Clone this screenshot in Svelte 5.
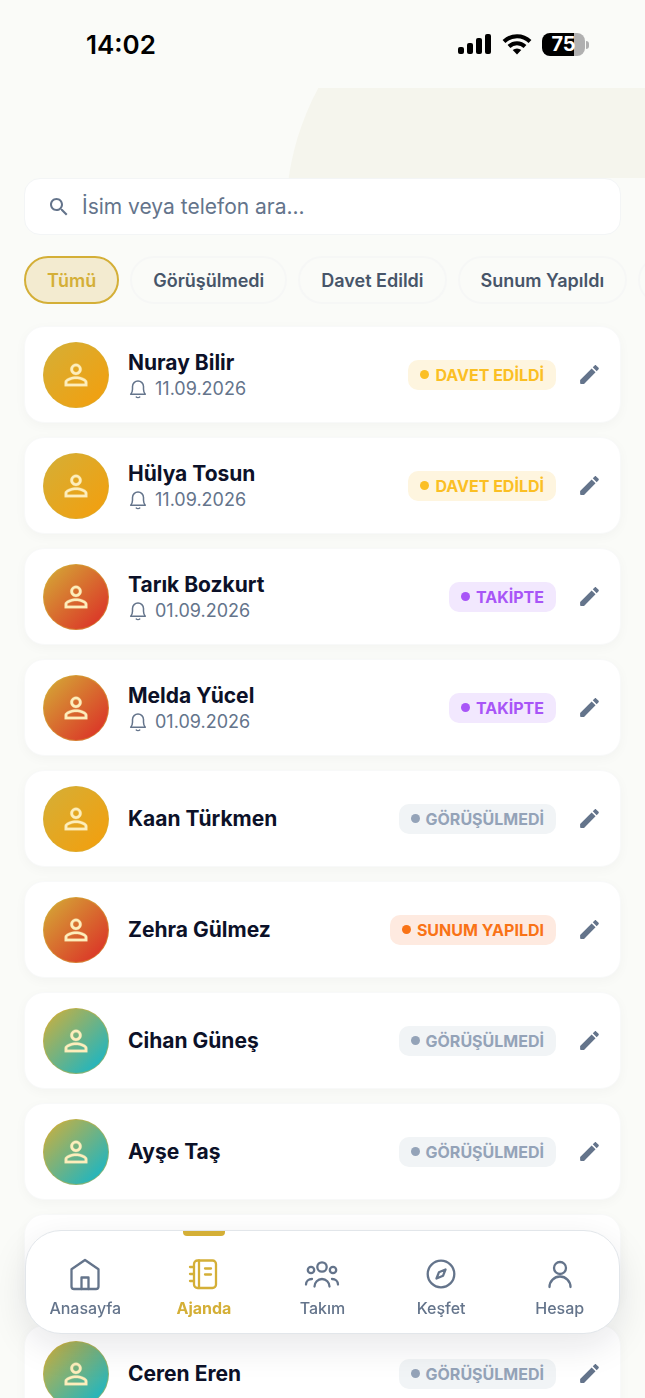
<script>
    let filters = ["Tümü", "Görüşülmedi", "Davet Edildi", "Sunum Yapıldı", "Takipte"];
    let activeFilter = "Tümü";
    let search = "";

    const statuses = {
        invited: "DAVET EDİLDİ",
        follow: "TAKİPTE",
        none: "GÖRÜŞÜLMEDİ",
        presented: "SUNUM YAPILDI",
    };

    let contacts = [
        { name: "Nuray Bilir", date: "11.09.2026", status: "invited", tone: "amber" },
        { name: "Hülya Tosun", date: "11.09.2026", status: "invited", tone: "amber" },
        { name: "Tarık Bozkurt", date: "01.09.2026", status: "follow", tone: "red" },
        { name: "Melda Yücel", date: "01.09.2026", status: "follow", tone: "red" },
        { name: "Kaan Türkmen", status: "none", tone: "amber" },
        { name: "Zehra Gülmez", status: "presented", tone: "red" },
        { name: "Cihan Güneş", status: "none", tone: "cyan" },
        { name: "Ayşe Taş", status: "none", tone: "cyan" },
        { name: "", status: "", tone: "amber" },
        { name: "Ceren Eren", status: "none", tone: "cyan" },
    ];

    let tabs = [
        { id: "home", label: "Anasayfa" },
        { id: "agenda", label: "Ajanda" },
        { id: "team", label: "Takım" },
        { id: "explore", label: "Keşfet" },
        { id: "account", label: "Hesap" },
    ];
    let activeTab = "agenda";
</script>

<div class="app">
    <div class="status-bar">
        <span class="clock">14:02</span>
        <div class="indicators">
            <svg width="34" height="22" viewBox="0 0 34 22">
                <rect x="0" y="14" width="6" height="7" rx="2" />
                <rect x="9" y="10" width="6" height="11" rx="2" />
                <rect x="18" y="5" width="6" height="16" rx="2" />
                <rect x="27" y="1" width="6" height="20" rx="2" />
            </svg>
            <svg width="30" height="22" viewBox="0 0 30 22">
                <g fill="none" stroke="#000" stroke-width="4">
                    <path d="M2 8.5a18.5 18.5 0 0 1 26 0" />
                    <path d="M7 13.5a11.5 11.5 0 0 1 16 0" />
                </g>
                <path d="M15 21.5l-4.3-4.4a6.5 6.5 0 0 1 8.6 0z" />
            </svg>
            <div class="battery"><span>75</span></div>
        </div>
    </div>

    <div class="header"></div>

    <div class="search">
        <svg width="24" height="24" viewBox="0 0 24 24">
            <path d="M15.5 14h-.79l-.28-.27C15.41 12.59 16 11.11 16 9.5 16 5.91 13.09 3 9.5 3S3 5.91 3 9.5 5.91 16 9.5 16c1.61 0 3.09-.59 4.23-1.57l.27.28v.79l5 4.99L20.49 19l-4.99-5zm-6 0C7.01 14 5 11.99 5 9.5S7.01 5 9.5 5 14 7.01 14 9.5 11.99 14 9.5 14z" />
        </svg>
        <input type="text" bind:value={search} placeholder="İsim veya telefon ara..." aria-label="İsim veya telefon ara" />
    </div>

    <div class="filters">
        {#each filters as filter}
            <button class="chip" class:active={filter === activeFilter} on:click={() => (activeFilter = filter)}>{filter}</button>
        {/each}
    </div>

    <div class="list">
        {#each contacts as contact}
            <div class="card">
                <div class="avatar {contact.tone}">
                    <svg width="34" height="34" viewBox="0 0 24 24">
                        <path d="M12 5.9c1.16 0 2.1.94 2.1 2.1s-.94 2.1-2.1 2.1S9.9 9.16 9.9 8s.94-2.1 2.1-2.1m0 9c2.97 0 6.1 1.46 6.1 2.1v1.1H5.9V17c0-.64 3.13-2.1 6.1-2.1M12 4C9.79 4 8 5.79 8 8s1.79 4 4 4 4-1.79 4-4-1.79-4-4-4zm0 9c-2.67 0-8 1.34-8 4v3h16v-3c0-2.66-5.33-4-8-4z" />
                    </svg>
                </div>
                <div class="info">
                    <div class="name">{contact.name}</div>
                    {#if contact.date}
                        <div class="date">
                            <svg width="20" height="20" viewBox="0 0 20 20">
                                <path d="M2.7 15.2h14.6c-1.3-1.4-1.8-3-1.8-5V7.5a5.5 5.5 0 0 0-11 0v2.7c0 2-.5 3.6-1.8 5z" />
                                <path d="M8.3 18c.8.8 2.6.8 3.4 0" />
                            </svg>
                            {contact.date}
                        </div>
                    {/if}
                </div>
                {#if contact.status}
                    <span class="badge {contact.status}">{statuses[contact.status]}</span>
                {/if}
                <button class="edit" aria-label="Düzenle">
                    <svg width="25" height="25" viewBox="0 0 24 24">
                        <path d="M3 17.25V20.2q0 .8.8.8H6.75L17.81 9.94l-3.75-3.75L3 17.25zM20.71 7.04c.39-.39.39-1.02 0-1.41l-2.34-2.34c-.39-.39-1.02-.39-1.41 0l-1.83 1.83 3.75 3.75 1.83-1.83z" />
                    </svg>
                </button>
            </div>
        {/each}
    </div>

    <nav class="tabs">
        {#each tabs as tab}
            <button class="tab" class:active={tab.id === activeTab} on:click={() => (activeTab = tab.id)}>
                <svg width="36" height="36" viewBox="0 0 36 36">
                    {#if tab.id === "home"}
                        <path d="M4.5 13.3L18 4l13.5 9.3V30.5a2.5 2.5 0 0 1-2.5 2.5H7a2.5 2.5 0 0 1-2.5-2.5z" />
                        <path d="M14.5 33V21.5h7V33" />
                    {:else if tab.id === "agenda"}
                        <rect x="8" y="4.5" width="22" height="27.5" rx="3.5" />
                        <path d="M13 4.5V32M4 11h4M4 18h4M4 25h4M19 12.5h6M19 18.5h6" />
                    {:else if tab.id === "team"}
                        <circle cx="18" cy="11" r="4.7" />
                        <circle cx="7" cy="14" r="3.2" />
                        <circle cx="29" cy="14" r="3.2" />
                        <path d="M10.5 30.5a7.5 7.5 0 0 1 15 0M2 28.5c0-3.2 2.5-5.5 6-5.5M34 28.5c0-3.2-2.5-5.5-6-5.5" />
                    {:else if tab.id === "explore"}
                        <circle cx="18" cy="18" r="13.3" />
                        <path d="M22.5 13.5l-2.4 6.2-6.6 2.8 2.4-6.2z" />
                    {:else}
                        <circle cx="18" cy="12" r="6" />
                        <path d="M7.5 31a10.5 10.5 0 0 1 21 0" />
                    {/if}
                </svg>
                <span>{tab.label}</span>
            </button>
        {/each}
    </nav>
</div>

<style>
    :global(body) {
        margin: 0;
        background: #fafaf8;
    }

    .app {
        height: 100vh;
        display: flex;
        flex-direction: column;
        overflow: hidden;
        background: #fafbf8;
        color: #0c1128;
        font-family: Inter, sans-serif;
    }

    button,
    input {
        font-family: inherit;
        border: none;
        background: none;
        padding: 0;
        margin: 0;
    }

    button {
        cursor: pointer;
    }

    svg {
        display: block;
        flex: none;
    }

    .status-bar {
        display: flex;
        align-items: center;
        justify-content: space-between;
        height: 88px;
        padding: 0 56px 0 86px;
        box-sizing: border-box;
        flex: none;
        color: #000;
    }

    .clock {
        font-size: 26px;
        font-weight: 600;
    }

    .indicators {
        display: flex;
        align-items: center;
        gap: 10px;
    }

    .battery {
        position: relative;
        width: 43px;
        height: 23px;
        margin-right: 4px;
        border-radius: 8px;
        background: linear-gradient(to right, #000 75%, #b0b0b0 75%);
        color: #fff;
        font-size: 20px;
        line-height: 23px;
        font-weight: 700;
        text-align: center;
    }

    .battery::after {
        content: "";
        position: absolute;
        right: -4px;
        top: 8px;
        width: 3px;
        height: 8px;
        border-radius: 0 4px 4px 0;
        background: #b0b0b0;
    }

    .header {
        position: relative;
        height: 90px;
        flex: none;
        overflow: hidden;
    }

    /* Big tinted circle, cut off by the header */
    .header::before {
        content: "";
        position: absolute;
        top: -142px;
        right: -181px;
        width: 540px;
        height: 540px;
        border-radius: 50%;
        background: #f5f5ed;
    }

    .search {
        display: flex;
        align-items: center;
        gap: 11px;
        height: 57px;
        margin: 0 24px;
        padding: 0 22px;
        box-sizing: border-box;
        flex: none;
        border: 1px solid #f3f5f6;
        border-radius: 16px;
        background: #fff;
        fill: #64748b;
    }

    .search input {
        flex: 1;
        min-width: 0;
        outline: none;
        font-size: 21px;
        color: #0c1128;
    }

    .search input::placeholder {
        color: #64748b;
        opacity: 1;
    }

    .filters {
        display: flex;
        gap: 11px;
        margin: 21px 0 22px;
        padding: 0 24px;
        flex: none;
        overflow: hidden;
    }

    .chip {
        height: 48px;
        padding: 0 21px;
        box-sizing: border-box;
        flex: none;
        border: 2px solid #f6f7f6;
        border-radius: 24px;
        font-size: 18px;
        font-weight: 600;
        color: #475569;
    }

    .chip.active {
        border-color: #d4af37;
        background: #f3ebd0;
        color: #d4af37;
    }

    .list {
        display: flex;
        flex-direction: column;
        gap: 14px;
        flex: 1;
        min-height: 0;
        padding: 0 24px;
    }

    .card {
        display: flex;
        align-items: center;
        height: 97px;
        padding: 0 11px 0 18px;
        box-sizing: border-box;
        flex: none;
        border: 1px solid #f8f9f9;
        border-radius: 20px;
        background: #fff;
        box-shadow: 0 3px 12px rgba(15, 23, 42, 0.03);
    }

    .avatar {
        display: flex;
        align-items: center;
        justify-content: center;
        width: 66px;
        height: 66px;
        box-sizing: border-box;
        flex: none;
        border: 1px solid rgba(212, 175, 55, 0.5);
        border-radius: 50%;
    }

    .avatar svg {
        fill: #fdeebc;
        stroke: #fdeebc;
        stroke-width: 0.2;
    }

    .amber {
        background: linear-gradient(135deg, #d4af37, #f59e0b) border-box;
    }

    .red {
        background: linear-gradient(135deg, #d4af37, #dc2626) border-box;
    }

    .cyan {
        background: linear-gradient(135deg, #d4af37, #06b6d4) border-box;
    }

    .info {
        flex: 1;
        min-width: 0;
        margin-left: 19px;
    }

    .name {
        font-size: 21px;
        line-height: 28px;
        font-weight: 700;
        white-space: nowrap;
    }

    .date {
        display: flex;
        align-items: center;
        gap: 7px;
        font-size: 18px;
        line-height: 24px;
        color: #64748b;
    }

    .date svg {
        fill: none;
        stroke: #64748b;
        stroke-width: 1.5;
        stroke-linejoin: round;
        stroke-linecap: round;
    }

    .badge {
        display: flex;
        align-items: center;
        gap: 6px;
        height: 30px;
        padding: 0 12px;
        flex: none;
        border-radius: 10px;
        font-size: 16px;
        font-weight: 700;
    }

    .badge::before {
        content: "";
        width: 9px;
        height: 9px;
        border-radius: 50%;
        background: currentColor;
    }

    .invited {
        background: #fef5df;
        color: #fbbf24;
    }

    .follow {
        background: #f2e8fe;
        color: #a855f7;
    }

    .none {
        background: #f1f4f6;
        color: #94a3b8;
    }

    .presented {
        background: #feeae0;
        color: #f97316;
    }

    .edit {
        display: flex;
        align-items: center;
        justify-content: center;
        width: 40px;
        height: 40px;
        margin-left: 13px;
        flex: none;
        fill: #64748b;
    }

    .tabs {
        position: fixed;
        left: 25px;
        right: 25px;
        bottom: 64px;
        display: flex;
        height: 104px;
        box-sizing: border-box;
        border: 1px solid #e2e6ea;
        border-radius: 36px;
        background: #fff;
        box-shadow: 0 12px 36px rgba(15, 23, 42, 0.1);
    }

    .tab {
        position: relative;
        display: flex;
        flex: 1;
        flex-direction: column;
        align-items: center;
        justify-content: center;
        gap: 6px;
        padding-top: 9px;
        color: #64748b;
        font-size: 16px;
        line-height: 20px;
        font-weight: 500;
    }

    .tab svg {
        fill: none;
        stroke: currentColor;
        stroke-width: 2.3;
        stroke-linecap: round;
        stroke-linejoin: round;
    }

    .tab.active {
        color: #d4af37;
        font-weight: 700;
    }

    .tab.active::before {
        content: "";
        position: absolute;
        top: 0;
        width: 42px;
        height: 5px;
        border-radius: 0 0 4px 4px;
        background: #d4af37;
    }
</style>
